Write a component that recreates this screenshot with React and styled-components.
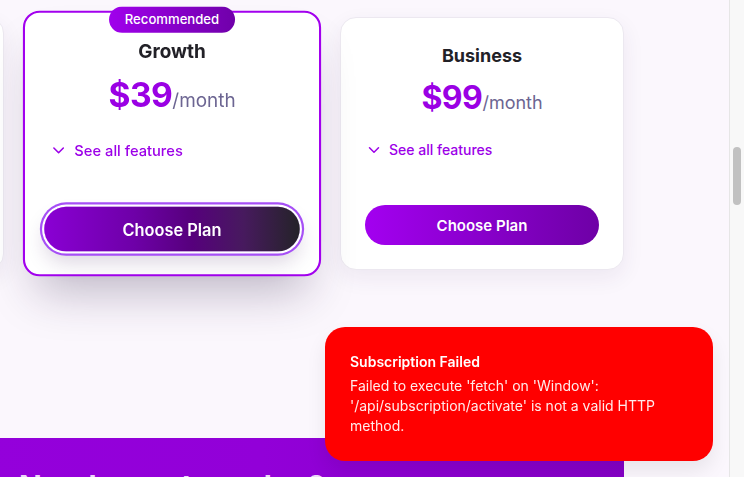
import React from "react";
import styled, { createGlobalStyle, css } from "styled-components";
import { ChevronDown } from "lucide-react";

const Global = createGlobalStyle`
  html, body { margin: 0; padding: 0; height: 100%; overflow: hidden; }
  body { font-family: Inter, "Noto Sans", sans-serif; -webkit-font-smoothing: antialiased; }
  * { box-sizing: border-box; }
`;

const Shell = styled.div`
  display: flex;
  height: 100vh;
  width: 100vw;
  overflow: hidden;
`;

const Main = styled.main`
  flex: 1;
  min-width: 0;
  overflow: hidden;
  background: #fbf7fd;
  padding-top: 17px;
`;

const Container = styled.div`
  width: 904px;
  margin-left: -280px;
  display: flex;
  flex-direction: column;
`;

const CardsRow = styled.div`
  display: grid;
  grid-template-columns: repeat(3, 284px);
  gap: 26px;
`;

const Card = styled.div`
  position: relative;
  height: 253px;
  display: flex;
  flex-direction: column;
  align-items: center;
  background: #fff;
  border-radius: 16px;
  border: 1px solid #ece8f0;
  box-shadow: 0 8px 22px rgba(60, 30, 90, 0.07);
  padding: 27px 24px 24px;
  ${(p) =>
    p.$featured &&
    css`
      border: 2px solid #a200ee;
      padding: 26px 23px 23px;
      transform: scale(1.05);
      z-index: 1;
      box-shadow: 0 28px 45px -14px rgba(40, 20, 60, 0.28);
    `}
`;

const Badge = styled.span`
  position: absolute;
  top: -6px;
  left: 50%;
  transform: translateX(-50%);
  background: linear-gradient(90deg, #a000ec, #7000aa);
  color: #fff;
  font-size: 12.5px;
  font-weight: 500;
  line-height: 17px;
  padding: 4px 15px;
  border-radius: 999px;
  white-space: nowrap;
`;

const Title = styled.h3`
  margin: 0;
  font-size: 18px;
  line-height: 1.2;
  font-weight: 700;
  color: #222127;
`;

const Price = styled.div`
  margin-top: 12px;
  line-height: 38px;
  display: flex;
  align-items: baseline;
`;

const Amount = styled.span`
  font-size: 32px;
  font-weight: 700;
  color: #9a00e4;
  letter-spacing: -0.5px;
`;

const Period = styled.span`
  font-size: 18px;
  font-weight: 400;
  color: #6c6592;
`;

const Features = styled.button`
  align-self: stretch;
  margin-top: 18px;
  display: flex;
  align-items: center;
  gap: 6px;
  background: none;
  border: 0;
  padding: 0;
  height: 20px;
  font-family: inherit;
  font-size: 14px;
  font-weight: 500;
  color: #9c00e8;
  cursor: pointer;
`;

const PlanButton = styled.button`
  margin-top: auto;
  align-self: stretch;
  height: 40px;
  border: 0;
  border-radius: 999px;
  font-family: inherit;
  font-size: 15px;
  font-weight: 600;
  color: #fff;
  background: linear-gradient(90deg, #a300f0, #6e00a6);
  cursor: pointer;
  ${(p) =>
    p.$active &&
    css`
      transform: scale(1.04, 1.06);
      background: linear-gradient(
        90deg,
        #8a00d4 0%,
        #6e00a8 35%,
        #56007c 58%,
        #471a5e 78%,
        #242328 100%
      );
      box-shadow: 0 0 0 2px #fff, 0 0 0 4px #a64ff6,
        0 10px 18px rgba(60, 20, 90, 0.18);
    `}
`;

const Banner = styled.section`
  margin-top: 168px;
  height: 120px;
  background: linear-gradient(90deg, #9600de 0%, #9200d8 60%, #8500c6 100%);
  display: flex;
  justify-content: center;
  padding-top: 30px;
`;

const BannerTitle = styled.h2`
  margin: 0;
  font-size: 30px;
  line-height: 1.2;
  font-weight: 700;
  color: rgba(255, 255, 255, 0.85);
`;

const ScrollTrack = styled.div`
  width: 15px;
  flex: none;
  background: #f8f8f8;
  border-left: 1px solid #e6e6e6;
  padding: 147px 3px 0 3px;
`;

const Thumb = styled.div`
  height: 58px;
  border-radius: 5px;
  background: #c1c1c1;
`;

const Toast = styled.div`
  position: fixed;
  right: 31px;
  bottom: 16px;
  width: 388px;
  background: #ff0000;
  color: #fff;
  border-radius: 20px;
  padding: 25px 25px 25px;
  box-shadow: 0 10px 20px rgba(0, 0, 0, 0.08);
`;

const ToastTitle = styled.div`
  font-size: 14px;
  font-weight: 600;
  line-height: 20px;
`;

const ToastBody = styled.div`
  margin-top: 4px;
  font-size: 14px;
  line-height: 20px;
  color: rgba(255, 255, 255, 0.92);
  padding-right: 12px;
`;

const plans = [
  { name: "Starter", price: "$9" },
  { name: "Growth", price: "$39", featured: true },
  { name: "Business", price: "$99" },
];

export default function App() {
  return (
    <>
      <Global />
      <Shell>
        <Main>
          <Container>
            <CardsRow>
              {plans.map((p) => (
                <Card key={p.name} $featured={p.featured}>
                  {p.featured && <Badge>Recommended</Badge>}
                  <Title>{p.name}</Title>
                  <Price>
                    <Amount>{p.price}</Amount>
                    <Period>/month</Period>
                  </Price>
                  <Features>
                    <ChevronDown size={18} strokeWidth={2} />
                    See all features
                  </Features>
                  <PlanButton $active={p.featured}>Choose Plan</PlanButton>
                </Card>
              ))}
            </CardsRow>
            <Banner>
              <BannerTitle>Need a custom plan?</BannerTitle>
            </Banner>
          </Container>
        </Main>
        <ScrollTrack>
          <Thumb />
        </ScrollTrack>
      </Shell>
      <Toast role="alert">
        <ToastTitle>Subscription Failed</ToastTitle>
        <ToastBody>
          Failed to execute 'fetch' on 'Window': '/api/subscription/activate'
          is not a valid HTTP method.
        </ToastBody>
      </Toast>
    </>
  );
}
